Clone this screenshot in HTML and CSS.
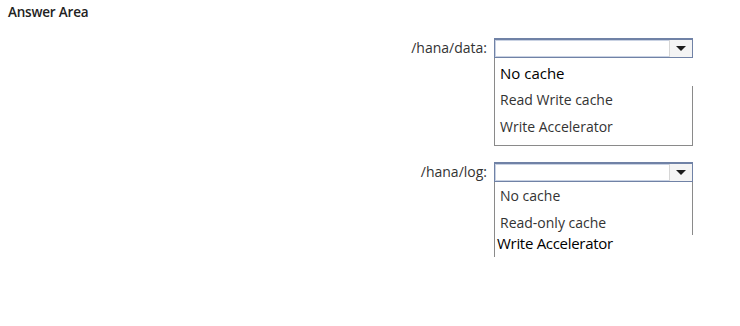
FILE: index.html
```html
<!DOCTYPE html>
<html lang="en">
<head>
    <meta charset="UTF-8">
    <title>Answer Area</title>
    <link rel="stylesheet" href="styles.css">
</head>
<body>
    <div class="page">
        <h3 class="title">Answer Area</h3>
        <div class="field field-data">
            <label class="label">/hana/data:</label>
            <div class="combo">
                <div class="select">
                    <span class="select-value"></span>
                    <span class="select-arrow"></span>
                </div>
                <ul class="list">
                    <li class="item item-pasted item-first">No cache</li>
                    <li class="item">Read Write cache</li>
                    <li class="item">Write Accelerator</li>
                </ul>
            </div>
        </div>
        <div class="field field-log">
            <label class="label">/hana/log:</label>
            <div class="combo">
                <div class="select">
                    <span class="select-value"></span>
                    <span class="select-arrow"></span>
                </div>
                <ul class="list list-open">
                    <li class="item">No cache</li>
                    <li class="item">Read-only cache</li>
                    <li class="item item-pasted item-last">Write Accelerator</li>
                </ul>
            </div>
        </div>
    </div>
</body>
</html>
```

FILE: styles.css
```css
html, body {
    height: 100%;
}
body {
    margin: 0;
    background-color: #ffffff;
    font-family: "Open Sans", "Liberation Sans", Arial, sans-serif;
    color: #3a3a3a;
}
.page {
    width: 740px;
    height: 326px;
    overflow: hidden;
}
.title {
    margin: 0;
    padding: 3px 0 0 8px;
    height: 35px;
    box-sizing: border-box;
    font-size: 13.5px;
    font-weight: 600;
    color: #222222;
    letter-spacing: -0.2px;
}
.field {
    display: grid;
    grid-template-columns: 487px 199px;
    column-gap: 7px;
    align-items: start;
}
.field-data {
    margin-top: 3px;
}
.field-log {
    margin-top: 16px;
}
.label {
    text-align: right;
    font-size: 14px;
    line-height: 20px;
    color: #333333;
}
.combo {
    width: 199px;
}
.select {
    display: flex;
    height: 20px;
    box-sizing: border-box;
    border: 1px solid #7082a6;
    border-top-width: 2px;
    box-shadow: inset 0 0 0 1px #c9d2e3;
    background-color: #ffffff;
}
.select-value {
    flex: 1;
}
.select-arrow {
    width: 22px;
    border-left: 1px solid #d6d6d6;
    background-color: #f4f4f4;
    display: flex;
    align-items: center;
    justify-content: center;
}
.select-arrow::after {
    content: "";
    border-left: 5px solid transparent;
    border-right: 5px solid transparent;
    border-top: 5px solid #1c1c1c;
}
.list {
    list-style: none;
    margin: 0;
    padding: 0 0 5px 0;
    border: 1px solid #8a8a8a;
    border-top: none;
}
.item {
    height: 27px;
    line-height: 27px;
    padding-left: 5px;
    font-size: 14px;
    color: #333333;
}
.item-pasted {
    color: #000000;
    background-color: #ffffff;
    margin-right: -1px;
    font-size: 15px;
}
.item-first {
    height: 28px;
    line-height: 30px;
}
.list-open {
    padding-bottom: 0;
    border-bottom: none;
}
.list-open .item {
    height: 26px;
    line-height: 27px;
}
.list-open .item:first-child {
    height: 27px;
    line-height: 27px;
}
.list-open .item-last {
    padding-left: 2px;
    height: 22px;
    line-height: 16px;
    letter-spacing: -0.3px;
}
```
